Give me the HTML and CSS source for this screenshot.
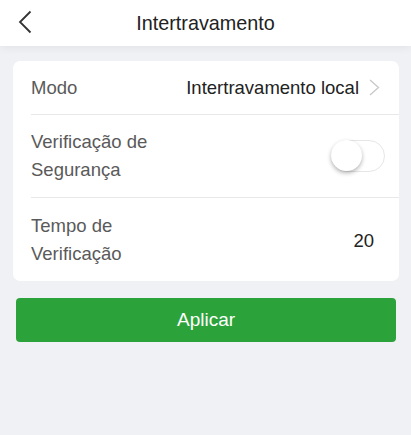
FILE: index.html
```
<!DOCTYPE html>
<html lang="pt">
<head>
    <meta charset="UTF-8">
    <meta name="viewport" content="width=device-width, initial-scale=1.0">
    <title>Intertravamento</title>
    <link rel="stylesheet" href="styles.css">
</head>
<body>
    <header class="topbar">
        <button class="back-btn" aria-label="Voltar">
            <svg width="14" height="24" viewBox="0 0 14 24">
                <path d="M12.5 1.5 L2 12 L12.5 22.5" fill="none" stroke="#333" stroke-width="1.8"/>
            </svg>
        </button>
        <h1 class="title">Intertravamento</h1>
    </header>

    <main class="content">
        <section class="card">
            <div class="row row-short">
                <div class="label">Modo</div>
                <div class="value">
                    Intertravamento local
                    <svg class="arrow" width="11" height="17" viewBox="0 0 11 17">
                        <path d="M1 1 L9.5 8.5 L1 16" fill="none" stroke="#c8c8c8" stroke-width="1.3"/>
                    </svg>
                </div>
            </div>
            <div class="row">
                <div class="label">Verificação de<br>Segurança</div>
                <div class="switch"><span class="knob"></span></div>
            </div>
            <div class="row">
                <div class="label">Tempo de<br>Verificação</div>
                <div class="value value-num">20</div>
            </div>
        </section>

        <button class="apply-btn">Aplicar</button>
    </main>
</body>
</html>
```

FILE: styles.css
```
:root {
    --page-bg: #f0f1f5;
    --card-bg: #ffffff;
    --label: #5a5a5a;
    --text: #222222;
    --divider: #e8e8e8;
    --green: #2ca33a;
}

* {
    margin: 0;
    padding: 0;
    box-sizing: border-box;
}

body {
    font-family: "Liberation Sans", Arial, sans-serif;
    background: var(--page-bg);
    color: var(--text);
    min-height: 100vh;
}

.topbar {
    position: relative;
    height: 46px;
    background: #fff;
    display: flex;
    align-items: center;
    justify-content: center;
    box-shadow: 0 2px 8px rgba(0, 0, 0, 0.06);
}

.back-btn {
    position: absolute;
    left: 18px;
    top: 10px;
    background: none;
    border: none;
    display: flex;
}

.title {
    font-size: 19.8px;
    font-weight: normal;
    color: #222;
}

.content {
    padding: 15px 12px 0 13px;
}

.card {
    background: var(--card-bg);
    border-radius: 7px;
    padding-left: 18px;
}

.row {
    display: flex;
    align-items: center;
    justify-content: space-between;
    min-height: 83px;
    padding-right: 25px;
    border-bottom: 1px solid var(--divider);
}

.row:last-child {
    border-bottom: none;
}

.row-short {
    min-height: 54px;
    padding-right: 19px;
}

.label {
    font-size: 18.5px;
    line-height: 28px;
    color: var(--label);
}

.value {
    display: flex;
    align-items: center;
    gap: 10px;
    font-size: 18.5px;
    color: var(--text);
}

.value-num {
    padding-top: 2px;
}

.switch {
    position: relative;
    width: 54px;
    height: 32px;
    margin-right: -11px;
    border: 1px solid #e6e6e6;
    border-radius: 16px;
    background: #fff;
}

.knob {
    position: absolute;
    left: -1px;
    top: -1px;
    width: 31px;
    height: 31px;
    border-radius: 50%;
    background: #fff;
    box-shadow: 0 2px 4px rgba(0, 0, 0, 0.3);
}

.apply-btn {
    display: block;
    width: 380px;
    height: 44px;
    margin: 17px 0 0 3px;
    border: none;
    border-radius: 4px;
    background: var(--green);
    color: #fff;
    font-family: inherit;
    font-size: 19px;
}
```
